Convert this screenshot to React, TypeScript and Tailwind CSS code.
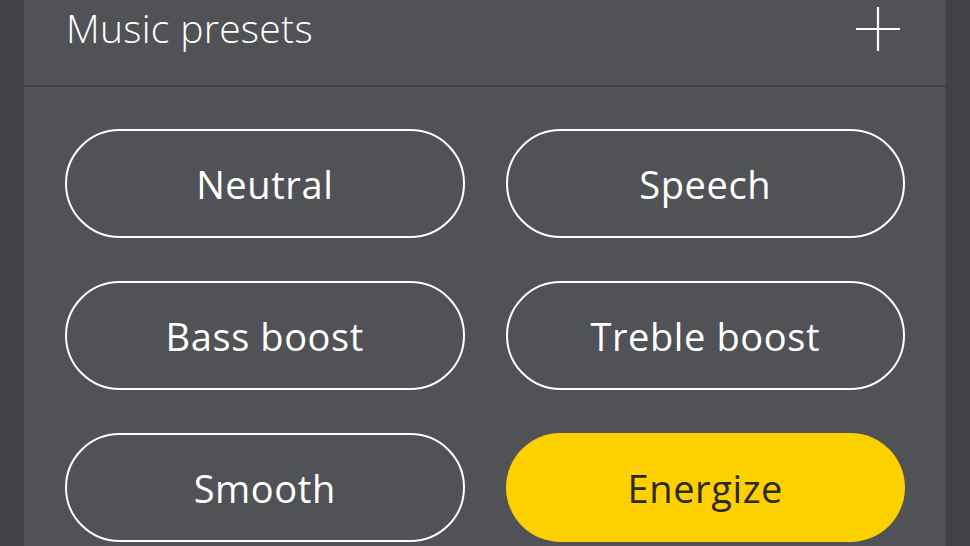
const PRESETS = [
  { id: 'neutral', label: 'Neutral' },
  { id: 'speech', label: 'Speech' },
  { id: 'bass', label: 'Bass boost' },
  { id: 'treble', label: 'Treble boost' },
  { id: 'smooth', label: 'Smooth' },
  { id: 'energize', label: 'Energize' },
];

export default function App() {
  const active = 'energize';

  return (
    <div className="w-[970px] h-[546px] overflow-hidden bg-[#404145] px-[24px]" style={{ fontFamily: '"Open Sans", "Noto Sans", sans-serif' }}>
      <div className="h-full bg-[#515256]">
        <div className="h-[85px] flex items-start justify-between pl-[42px] pr-[46px]">
          <h2 className="mt-[4px] text-[39px] font-light text-white leading-[48px] tracking-[0.3px]">Music presets</h2>
          {/* plus icon */}
          <svg className="mt-[7px] w-[44px] h-[44px]" viewBox="0 0 44 44">
            <path d="M22 0 V44 M0 22 H44" stroke="white" strokeWidth="2.2" fill="none" />
          </svg>
        </div>
        <div className="h-[2px] bg-[#3e3f43]" />
        <div className="grid grid-cols-2 gap-x-[41px] gap-y-[43px] px-[41px] pt-[42px]">
          {PRESETS.map((p) => (
            <button
              key={p.id}
              className={`h-[109px] rounded-full flex items-center justify-center text-[38px] leading-none ${
                p.id === active
                  ? 'bg-[#fdd000] text-[#2b2a26]'
                  : 'border-2 border-white text-white'
              }`}
            >
              <span className="tracking-[0.6px]">{p.label}</span>
            </button>
          ))}
        </div>
      </div>
    </div>
  );
}
